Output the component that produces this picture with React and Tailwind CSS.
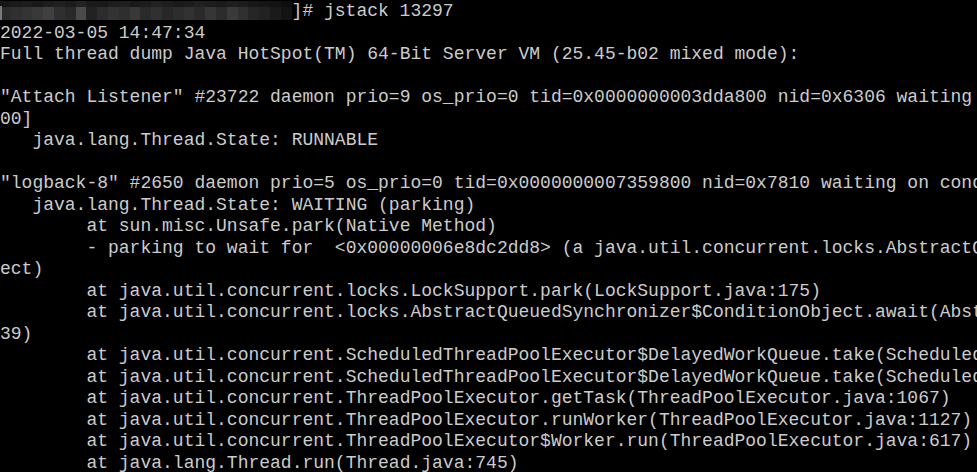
import React from "react";

const topRow = [
  "bg-[#161616]", "bg-[#1a1a1a]", "bg-[#1c1c1c]", "bg-[#181818]", "bg-[#1e1e1e]", "bg-[#202020]",
  "bg-[#1b1b1b]", "bg-[#232323]", "bg-[#1a1a1a]", "bg-[#181818]", "bg-[#1d1d1d]", "bg-[#1f1f1f]",
  "bg-[#1a1a1a]", "bg-[#1c1c1c]", "bg-[#222222]", "bg-[#1e1e1e]", "bg-[#191919]", "bg-[#1c1c1c]",
  "bg-[#202020]", "bg-[#1d1d1d]", "bg-[#1a1a1a]", "bg-[#1e1e1e]", "bg-[#1c1c1c]", "bg-[#171717]",
  "bg-[#151515]", "bg-[#121212]", "bg-[#0e0e0e]",
];
const bottomRow = [
  "bg-[#2b2b2b]", "bg-[#303030]", "bg-[#343434]", "bg-[#393939]", "bg-[#404040]", "bg-[#2f2f2f]",
  "bg-[#292929]", "bg-[#4a4a4a]", "bg-[#222222]", "bg-[#2c2c2c]", "bg-[#333333]", "bg-[#2e2e2e]",
  "bg-[#383838]", "bg-[#2a2a2a]", "bg-[#303030]", "bg-[#272727]", "bg-[#2d2d2d]", "bg-[#323232]",
  "bg-[#2a2a2a]", "bg-[#363636]", "bg-[#2c2c2c]", "bg-[#3a3a3a]", "bg-[#303030]", "bg-[#262626]",
  "bg-[#222222]", "bg-[#1a1a1a]", "bg-[#131313]",
];

const lines = [
  null,
  "2022-03-05 14:47:34",
  "Full thread dump Java HotSpot(TM) 64-Bit Server VM (25.45-b02 mixed mode):",
  "",
  "\"Attach Listener\" #23722 daemon prio=9 os_prio=0 tid=0x0000000003dda800 nid=0x6306 waiting on condition [0x00000000000000",
  "00]",
  "   java.lang.Thread.State: RUNNABLE",
  "",
  "\"logback-8\" #2650 daemon prio=5 os_prio=0 tid=0x0000000007359800 nid=0x7810 waiting on condition [0x000000000a67f000]",
  "   java.lang.Thread.State: WAITING (parking)",
  "        at sun.misc.Unsafe.park(Native Method)",
  "        - parking to wait for  <0x00000006e8dc2dd8> (a java.util.concurrent.locks.AbstractQueuedSynchronizer$ConditionObj",
  "ect)",
  "        at java.util.concurrent.locks.LockSupport.park(LockSupport.java:175)",
  "        at java.util.concurrent.locks.AbstractQueuedSynchronizer$ConditionObject.await(AbstractQueuedSynchronizer.java:20",
  "39)",
  "        at java.util.concurrent.ScheduledThreadPoolExecutor$DelayedWorkQueue.take(ScheduledThreadPoolExecutor.java:1088)",
  "        at java.util.concurrent.ScheduledThreadPoolExecutor$DelayedWorkQueue.take(ScheduledThreadPoolExecutor.java:809)",
  "        at java.util.concurrent.ThreadPoolExecutor.getTask(ThreadPoolExecutor.java:1067)",
  "        at java.util.concurrent.ThreadPoolExecutor.runWorker(ThreadPoolExecutor.java:1127)",
  "        at java.util.concurrent.ThreadPoolExecutor$Worker.run(ThreadPoolExecutor.java:617)",
  "        at java.lang.Thread.run(Thread.java:745)",
];

function Mosaic() {
  return (
    <div className="relative flex flex-col w-[291.6px] h-[19px] shrink-0">
      <div className="flex h-[6px]">
        {topRow.map((c, i) => (
          <div key={i} className={"w-[10.8px] h-full " + c} />
        ))}
      </div>
      <div className="flex h-[13px]">
        {bottomRow.map((c, i) => (
          <div key={i} className={"w-[10.8px] h-full " + c} />
        ))}
      </div>
      <div className="absolute left-0 top-[5px] w-[2px] h-[14px] bg-[#7a7a7a]" />
    </div>
  );
}

export default function App() {
  return (
    <div className="w-[977px] h-[472px] bg-black overflow-hidden pt-[1px] font-['Courier_New','Nimbus_Mono_PS','Nimbus_Mono_L','FreeMono','Liberation_Mono',monospace] text-[18px] leading-[21.5px] text-[#cccccc]">
      {lines.map((l, i) =>
        l === null ? (
          <div key={i} className="flex items-start h-[21.5px] whitespace-pre">
            <Mosaic />
            <span>]# jstack 13297</span>
          </div>
        ) : (
          <div key={i} className="h-[21.5px] whitespace-pre">
            {l}
          </div>
        )
      )}
    </div>
  );
}
